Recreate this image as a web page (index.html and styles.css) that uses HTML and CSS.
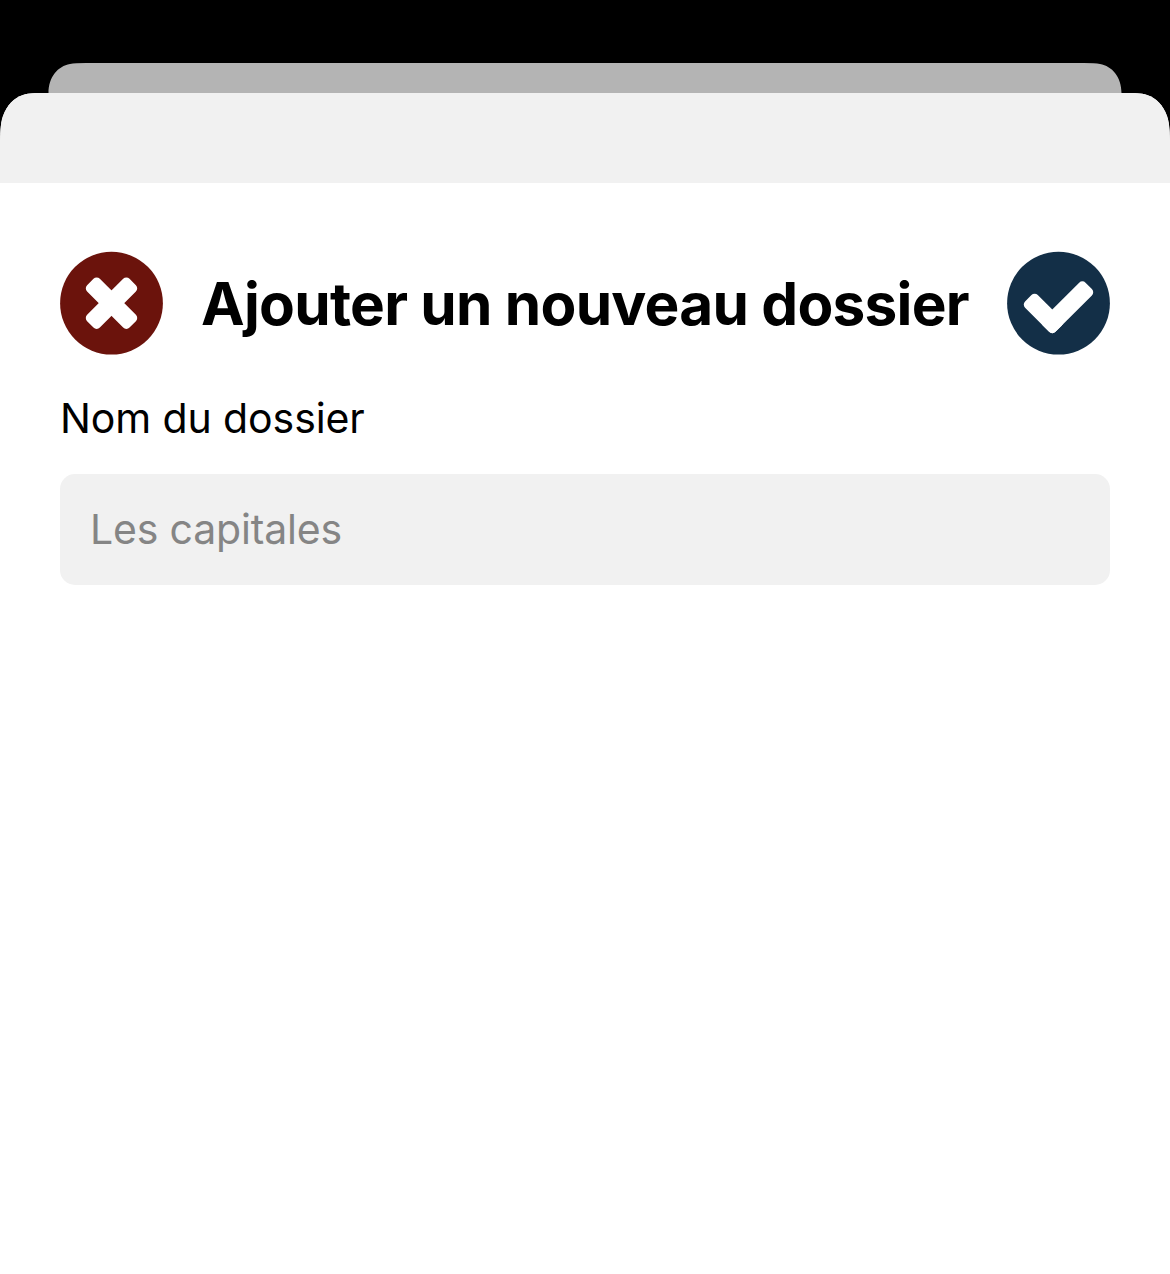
FILE: index.html
```html
<!DOCTYPE html>
<html lang="fr">
<head>
<meta charset="utf-8">
<title>Ajouter un nouveau dossier</title>
<link rel="stylesheet" href="styles.css">
</head>
<body>
<div class="previous-sheet"></div>
<main class="sheet">
  <div class="sheet-bar"></div>
  <form class="content">
    <header class="header">
      <button class="icon-button" type="button" aria-label="Annuler">
        <svg class="icon" viewBox="0 0 103 103">
          <circle class="cancel-disc" cx="51.5" cy="51.2" r="51.4"/>
          <g class="mark" transform="translate(51.5 51.2) rotate(45)">
            <rect x="-30" y="-9" width="60" height="18" rx="4.5"/>
            <rect x="-9" y="-30" width="18" height="60" rx="4.5"/>
          </g>
        </svg>
      </button>
      <h1 class="title">Ajouter un nouveau dossier</h1>
      <button class="icon-button" type="button" aria-label="Valider">
        <svg class="icon" viewBox="0 0 103 103">
          <circle class="confirm-disc" cx="51.5" cy="51.2" r="51.4"/>
          <g class="mark" transform="translate(45.3 83) rotate(-45)">
            <rect x="0" y="-18" width="60.5" height="18" rx="4.5"/>
            <rect x="0" y="-43" width="18" height="43" rx="4.5"/>
          </g>
        </svg>
      </button>
    </header>
    <label class="label" for="folder-name">Nom du dossier</label>
    <input class="field" id="folder-name" type="text" placeholder="Les capitales">
  </form>
</main>
</body>
</html>
```
FILE: styles.css
```css
* {
  box-sizing: border-box;
}

body {
  margin: 0;
  height: 1274px;
  padding-top: 63px;
  display: flex;
  flex-direction: column;
  overflow: hidden;
  background: #000;
  color: #000;
  font-family: Inter, "Liberation Sans", sans-serif;
}

.previous-sheet {
  flex: none;
  height: 30px;
  margin: 0 48px;
  background: #b4b4b4;
  clip-path: path("M.5 30C.5 14 10 3 22 1Q27 0 38 0H1036Q1047 0 1052 1C1064 3 1073.5 14 1073.5 30Z");
}

.sheet {
  flex: 1;
  background: #fff;
  clip-path: path("M0 56C0 36 1 29 3 23C7 12 14 5 23 2C29 0 36 0 48 0H1122C1134 0 1141 0 1147 2C1156 5 1163 12 1167 23C1169 29 1170 36 1170 56V1181H0Z");
}

.sheet-bar {
  height: 90px;
  background: #f1f1f1;
}

.content {
  display: flex;
  flex-direction: column;
  padding: 69px 60px 0;
}

.header {
  display: flex;
  align-items: center;
  justify-content: space-between;
  height: 103px;
}

.icon-button {
  flex: none;
  width: 103px;
  height: 103px;
  padding: 0;
  border: 0;
  background: none;
}

.icon {
  display: block;
  width: 103px;
  height: 103px;
  overflow: visible;
}

.cancel-disc {
  fill: #6b130c;
}

.confirm-disc {
  fill: #132f47;
}

.mark {
  fill: #fff;
}

.title {
  margin: 0;
  font-size: 58.5px;
  font-weight: 700;
  line-height: 72px;
  letter-spacing: -0.74px;
  white-space: nowrap;
}

.label {
  margin-top: 38px;
  font-size: 41px;
  line-height: 50px;
  letter-spacing: -0.1px;
}

.field {
  width: 100%;
  height: 111px;
  margin-top: 31px;
  padding: 0 30px 2px;
  border: 0;
  border-radius: 15px;
  outline: 0;
  background: #f1f1f1;
  color: #000;
  font: 41px Inter, "Liberation Sans", sans-serif;
  letter-spacing: -0.18px;
}

.field::placeholder {
  color: #858585;
  opacity: 1;
}
```
